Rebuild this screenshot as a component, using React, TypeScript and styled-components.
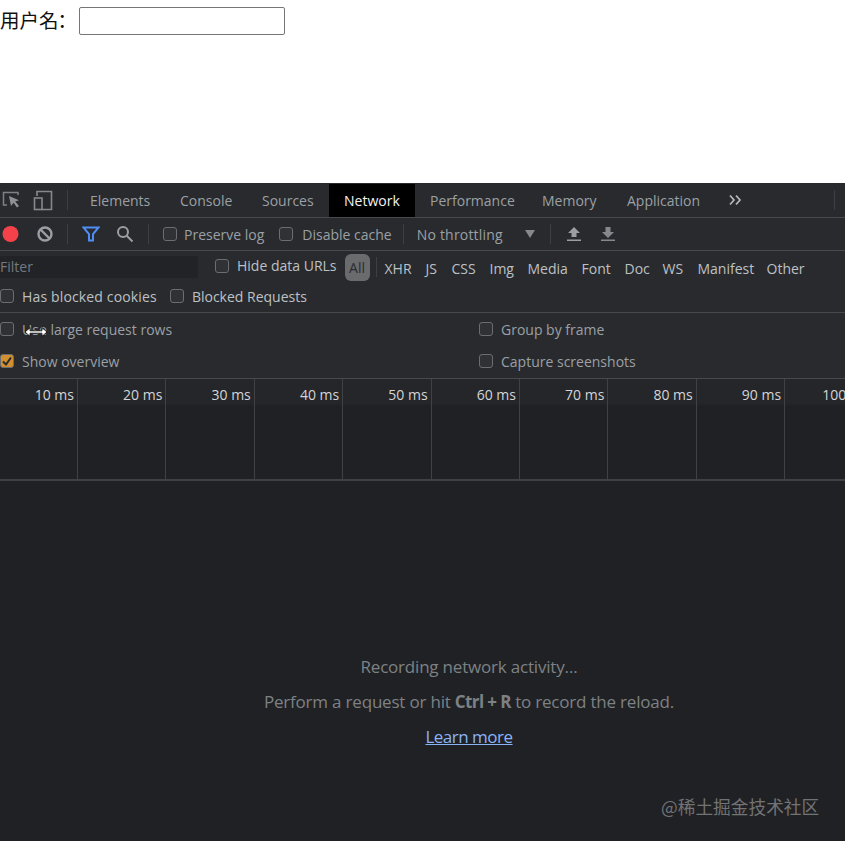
import React from "react";
import styled, { createGlobalStyle } from "styled-components";

const Global = createGlobalStyle`
  html, body { margin: 0; padding: 0; background: #fff; }
  body { font-family: "Open Sans", "Noto Sans", "Noto Sans CJK SC", sans-serif; overflow: hidden; }
`;
const Page = styled.div`
  position: relative; width: 845px; height: 841px; overflow: hidden;
  display: flex; flex-direction: column;
`;
const FormArea = styled.div`
  height: 183px; flex: none; background: #fff; display: flex; align-items: flex-start;
  padding-top: 7px; box-sizing: border-box;
`;
const FormLabel = styled.label`
  font: 19.500px/26px "Noto Sans CJK TC", "Noto Sans CJK SC", sans-serif; color: #111; width: 79px; white-space: nowrap;
`;
const Colon = styled.span`
  display: inline-block; margin-left: -6px; transform: translateY(1px);
`;
const TextInput = styled.input`
  width: 206px; height: 28px; box-sizing: border-box; border: 1px solid #767676; border-radius: 2px;
  background: #fff; padding: 0; margin: 0;
`;
const Devtools = styled.div`
  flex: 1; display: flex; flex-direction: column; background: #202124; color: #9aa0a6; min-height: 0;
`;
const Row = styled.div<{ $h: number; $line?: boolean }>`
  flex: none; height: ${p => p.$h}px; display: flex; align-items: center; background: #292a2d;
  box-sizing: border-box; white-space: nowrap; font-size: 14px;
  border-bottom: ${p => (p.$line ? "1px solid #47494c" : "none")};
`;
const IconSlot = styled.span<{ $w: number }>`
  flex: none; width: ${p => p.$w}px; display: flex; align-items: center; justify-content: center;
`;
const Sep = styled.span<{ $l: number; $r: number; $h?: number }>`
  flex: none; width: 1px; height: ${p => p.$h ?? 20}px; background: #3d3f42;
  margin: 0 ${p => p.$r}px 0 ${p => p.$l}px;
`;
const Tab = styled.div<{ $active?: boolean; $w: number }>`
  height: 33px; width: ${p => p.$w}px; flex: none; box-sizing: border-box; display: flex; align-items: center;
  padding-left: 15px; font-size: 14px;
  color: ${p => (p.$active ? "#f1f3f4" : "#9aa0a6")};
  background: ${p => (p.$active ? "#000" : "transparent")};
`;
const Box = styled.span<{ $on?: boolean }>`
  flex: none; width: 14px; height: 14px; border-radius: 3px; box-sizing: border-box;
  border: 1px solid #6b6d71; background: ${p => (p.$on ? "#d18f2f" : "#303134")};
  display: inline-flex; align-items: center; justify-content: center;
`;
const Check = styled.label<{ $gap?: number; $left?: number; $light?: boolean; $bottom?: number; $ls?: number }>`
  display: inline-flex; align-items: center; gap: ${p => p.$gap ?? 7}px;
  margin: 0 0 ${p => p.$bottom ?? 0}px ${p => p.$left ?? 0}px;
  font-size: 14px; letter-spacing: ${p => p.$ls ?? 0}px; color: ${p => (p.$light ? "#bdc1c6" : "#9aa0a6")};
`;
const ThrottleText = styled.span`
  width: 108px; flex: none; font-size: 14px; letter-spacing: 0.2px; color: #9aa0a6;
`;
const FilterField = styled.div`
  width: 198px; height: 22px; flex: none; background: #222327; color: #75797e; font-size: 14px;
  line-height: 22px; margin: 1px 17px 0 0;
`;
const Pill = styled.span`
  width: 25px; height: 27px; flex: none; border-radius: 6px; background: #6a6b6d; color: #2b2c2f;
  font-size: 14px; display: flex; align-items: center; justify-content: center; margin: 2px 0 0 8px;
`;
const Types = styled.div`
  display: flex; font-size: 14px; color: #bdc1c6; padding-top: 3px;
`;
const TypeItem = styled.span<{ $w: number }>`
  flex: none; width: ${p => p.$w}px;
`;
const Settings = styled.div`
  flex: none; height: 66px; background: #292a2d; border-bottom: 1px solid #47494c; box-sizing: border-box;
  display: grid; grid-template-columns: 479px 1fr; grid-auto-rows: 32px; align-items: center;
`;
const Timeline = styled.div`
  flex: none; height: 102px; display: flex; box-sizing: border-box; border-bottom: 2px solid #3f4144;
  background: linear-gradient(#252629 0, #252629 24px, #202124 27px);
`;
const Tick = styled.div<{ $w: number }>`
  flex: none; width: ${p => p.$w}px; box-sizing: border-box; border-right: 1px solid #3f4144;
  text-align: right; padding: 6px 3px 0 0; font-size: 14px; color: #d3d5d8; white-space: nowrap;
`;
const Empty = styled.div`
  flex: 1; display: flex; flex-direction: column; align-items: center; padding: 168px 0 0 93px;
  font-size: 17px; color: #7d8185; letter-spacing: -0.2px;
`;
const EmptyLine = styled.div` height: 35px; line-height: 35px; white-space: nowrap; `;
const Strong = styled.b` letter-spacing: -0.6px; `;
const Link = styled.a`
  color: #8ab4f8; text-decoration: underline; font-size: 17px; letter-spacing: -0.5px;
`;
const Cursor = styled.svg` position: absolute; left: 24px; top: 327px; `;
const Watermark = styled.div`
  position: absolute; left: 661px; top: 794px; font: 17.700px/24px "Noto Sans CJK SC", sans-serif;
  color: #727375; white-space: nowrap;
`;

const ticks: [number, string][] = [[78,"10 ms"],[88.4,"20 ms"],[88.4,"30 ms"],[88.4,"40 ms"],[88.4,"50 ms"],[88.4,"60 ms"],[88.4,"70 ms"],[88.4,"80 ms"],[88.4,"90 ms"],[88.4,"100 ms"]];
const types: [string, number][] = [["XHR",41],["JS",26],["CSS",38],["Img",38],["Media",54],["Font",43],["Doc",38],["WS",35],["Manifest",69],["Other",38]];
const tabs: [string, number][] = [["Elements",90],["Console",82],["Sources",82],["Network",86],["Performance",112],["Memory",85],["Application",101]];

export default function App() {
  return (
    <Page>
      <Global />
      <FormArea>
        <FormLabel>用户名<Colon>：</Colon></FormLabel>
        <TextInput />
      </FormArea>
      <Devtools>
        <Row $h={35} $line>
          <IconSlot $w={22}>
            <svg width="20" height="18" viewBox="0 0 20 18" fill="none">
              <path d="M17 4V1.500H2.500V14H6" stroke="#7d8185" strokeWidth="1.500" />
              <path d="M8 5l10 4.200-3.800 1.400L18 15l-2 1.600-3.400-4.800L10 15z" fill="#8e9296" />
            </svg>
          </IconSlot>
          <IconSlot $w={41}>
            <svg width="20" height="21" viewBox="0 0 20 21" fill="none" stroke="#85898d" strokeWidth="1.600">
              <path d="M4 6V1.500H18.500V19.500H9" />
              <rect x="1.500" y="8" width="7.500" height="11.500" />
            </svg>
          </IconSlot>
          <Sep $l={4} $r={7} />
          {tabs.map(([t, w]) => <Tab key={t} $w={w} $active={t === "Network"}>{t}</Tab>)}
          <IconSlot $w={43}>
            <svg width="14" height="12" viewBox="0 0 14 12" fill="none" stroke="#b6babd" strokeWidth="1.700">
              <path d="M2 1.500L6 6l-4 4.500M8 1.500L12 6l-4 4.500" />
            </svg>
          </IconSlot>
          <Sep $l={78} $r={0} />
        </Row>
        <Row $h={33} $line>
          <IconSlot $w={20}>
            <svg width="18" height="18"><circle cx="9.500" cy="9" r="8" fill="#f5424a" /></svg>
          </IconSlot>
          <IconSlot $w={50}>
            <svg width="18" height="18" viewBox="0 0 18 18" fill="none" stroke="#9b9ea2" strokeWidth="2.400">
              <circle cx="9" cy="9" r="6.500" /><path d="M4.500 4.500l9 9" />
            </svg>
          </IconSlot>
          <Sep $l={-3} $r={0} />
          <IconSlot $w={46}>
            <svg width="18" height="16" viewBox="0 0 18 16" fill="none" stroke="#4f8df5" strokeWidth="2">
              <path d="M1.500 1.500h15L11 8v6.500H7V8z" />
            </svg>
          </IconSlot>
          <IconSlot $w={22}>
            <svg width="18" height="18" viewBox="0 0 18 18" fill="none" stroke="#9b9ea2" strokeWidth="2">
              <circle cx="7" cy="7" r="5" /><path d="M10.500 10.500L16.500 16.500" />
            </svg>
          </IconSlot>
          <Sep $l={12} $r={14} />
          <Check><Box />Preserve log</Check>
          <Check $gap={9} $left={15}><Box />Disable cache</Check>
          <Sep $l={11} $r={13} />
          <ThrottleText>No throttling</ThrottleText>
          <svg width="10" height="8" viewBox="0 0 10 8"><path d="M0 0h10L5 8z" fill="#85898d" /></svg>
          <Sep $l={15} $r={0} />
          <IconSlot $w={46}>
            <svg width="14" height="16" viewBox="0 0 14 16"><path d="M7 1l6 6H9.500v4h-5V7H1zM0 13.500h14V15H0z" fill="#9b9ea2" /></svg>
          </IconSlot>
          <IconSlot $w={22}>
            <svg width="14" height="16" viewBox="0 0 14 16"><path d="M4.500 1h5v5H13l-6 6-6-6h3.500zM0 13.500h14V15H0z" fill="#85898d" /></svg>
          </IconSlot>
        </Row>
        <Row $h={31}>
          <FilterField>Filter</FilterField>
          <Check $gap={8} $light $bottom={2}><Box />Hide data URLs</Check>
          <Pill>All</Pill>
          <Sep $l={6} $r={8} />
          <Types>{types.map(([t, w]) => <TypeItem key={t} $w={w}>{t}</TypeItem>)}</Types>
        </Row>
        <Row $h={31} $line>
          <Check $gap={8} $light $bottom={2} $ls={0.15}><Box />Has blocked cookies</Check>
          <Check $gap={8} $left={13} $light $bottom={2}><Box />Blocked Requests</Check>
        </Row>
        <Settings>
          <Check $gap={8}><Box />Use large request rows</Check>
          <Check $gap={8}><Box />Group by frame</Check>
          <Check $gap={8}><Box $on><svg width="12" height="12" viewBox="0 0 12 12" fill="none" stroke="#292a2d" strokeWidth="2"><path d="M2 6.500l3 3 5-7" /></svg></Box>Show overview</Check>
          <Check $gap={8}><Box />Capture screenshots</Check>
        </Settings>
        <Timeline>
          {ticks.map(([w, t]) => <Tick key={t} $w={w}>{t}</Tick>)}
        </Timeline>
        <Empty>
          <EmptyLine>Recording network activity…</EmptyLine>
          <EmptyLine>Perform a request or hit <Strong>Ctrl + R</Strong> to record the reload.</EmptyLine>
          <EmptyLine><Link>Learn more</Link></EmptyLine>
        </Empty>
      </Devtools>
      <Cursor width="24" height="10" viewBox="0 0 24 10">
        <path d="M1 5l5-4.300V3.800H18V.7L23 5l-5 4.300V6.200H6v3.100z" fill="#fff" stroke="#000" strokeWidth="0.800" />
      </Cursor>
      <Watermark>@稀土掘金技术社区</Watermark>
    </Page>
  );
}
